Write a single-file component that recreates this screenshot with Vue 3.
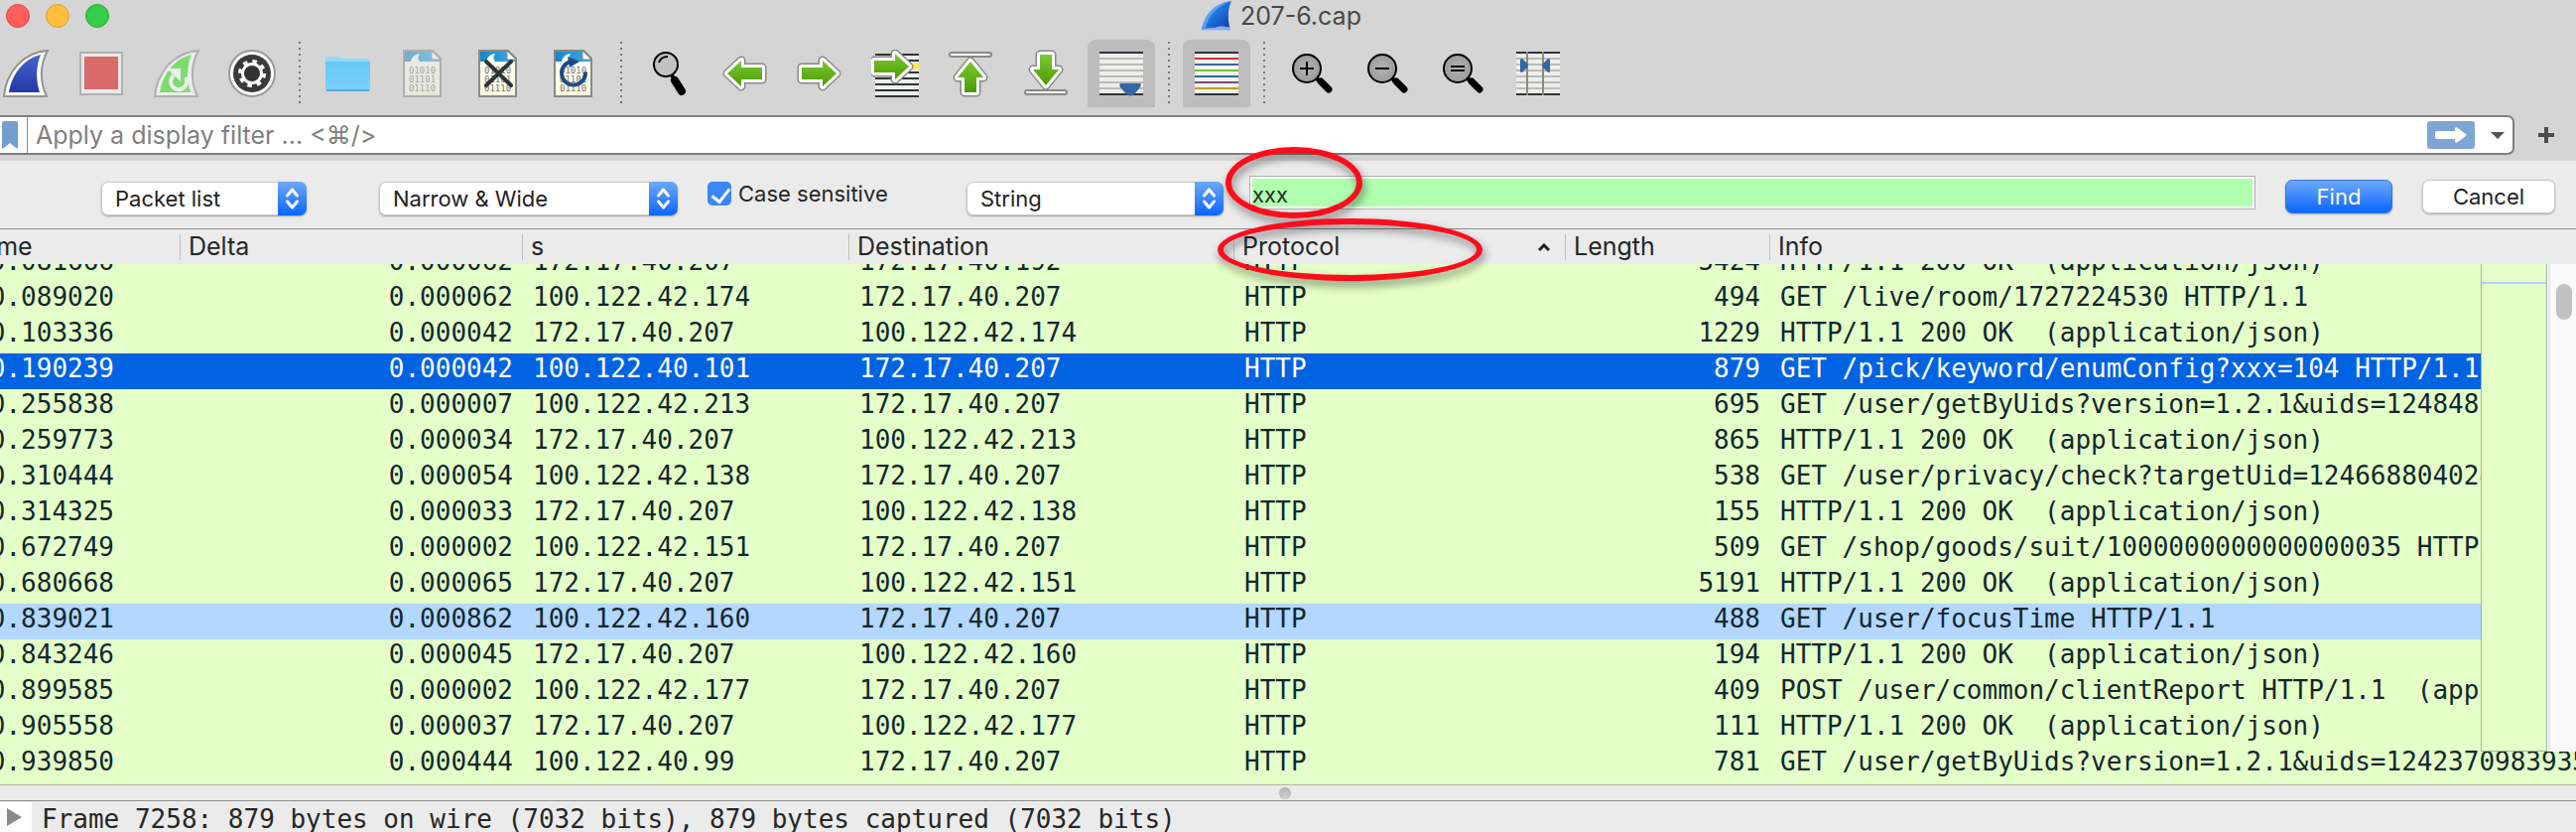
<script setup>
import { ref } from 'vue'

const filter = ref('')
const term = ref('xxx')
const caseSensitive = ref(true)

const columns = [
  { label: 'Time', cls: 'c-time' },
  { label: 'Delta', cls: 'c-delta' },
  { label: 's', cls: 'c-src' },
  { label: 'Destination', cls: 'c-dst' },
  { label: 'Protocol', cls: 'c-proto' },
  { label: 'Length', cls: 'c-len' },
  { label: 'Info', cls: 'c-info' },
]

const OK = 'HTTP/1.1 200 OK  (application/json)'
const rows = [
  ['0.081666', '0.000062', '172.17.40.207', '172.17.40.192', '5424', OK, 'cut'],
  ['0.089020', '0.000062', '100.122.42.174', '172.17.40.207', '494', 'GET /live/room/1727224530 HTTP/1.1'],
  ['0.103336', '0.000042', '172.17.40.207', '100.122.42.174', '1229', OK],
  ['0.190239', '0.000042', '100.122.40.101', '172.17.40.207', '879', 'GET /pick/keyword/enumConfig?xxx=104 HTTP/1.1', 'selected'],
  ['0.255838', '0.000007', '100.122.42.213', '172.17.40.207', '695', 'GET /user/getByUids?version=1.2.1&uids=1248481'],
  ['0.259773', '0.000034', '172.17.40.207', '100.122.42.213', '865', OK],
  ['0.310444', '0.000054', '100.122.42.138', '172.17.40.207', '538', 'GET /user/privacy/check?targetUid=124668804024'],
  ['0.314325', '0.000033', '172.17.40.207', '100.122.42.138', '155', OK],
  ['0.672749', '0.000002', '100.122.42.151', '172.17.40.207', '509', 'GET /shop/goods/suit/1000000000000000035 HTTP/1.1'],
  ['0.680668', '0.000065', '172.17.40.207', '100.122.42.151', '5191', OK],
  ['0.839021', '0.000862', '100.122.42.160', '172.17.40.207', '488', 'GET /user/focusTime HTTP/1.1', 'related'],
  ['0.843246', '0.000045', '172.17.40.207', '100.122.42.160', '194', OK],
  ['0.899585', '0.000002', '100.122.42.177', '172.17.40.207', '409', 'POST /user/common/clientReport HTTP/1.1  (app'],
  ['0.905558', '0.000037', '172.17.40.207', '100.122.42.177', '111', OK],
  ['0.939850', '0.000444', '100.122.40.99', '172.17.40.207', '781', 'GET /user/getByUids?version=1.2.1&uids=1242370983935'],
]

const stripes = [9, 15, 21, 27, 33, 39]
const colorStripes = [
  [9, '#d8322f'], [15, '#3465a4'], [21, '#73c820'], [27, '#3465a4'], [33, '#75507b'], [39, '#c4a000'],
]
const fin = 'M2 47C4 24 20 3 46 1C38 15 38 33 45 47Z'
const right = 'M6 18H27V11L41 24L27 37V30H6Z'
const left = 'M42 18H21V11L7 24L21 37V30H42Z'
const up = 'M24 12L37 28H30V43H18V28H11Z'
const down = 'M24 36L37 20H30V5H18V20H11Z'
const page = 'M5 1H34L42 9V47H5Z'
</script>

<template>
  <div class="window">
    <svg class="defs" width="0" height="0" aria-hidden="true">
      <defs>
        <linearGradient id="g-green" x1="0" y1="0" x2="0" y2="1"><stop offset="0" stop-color="#7bc832" /><stop offset="1" stop-color="#4e9a06" /></linearGradient>
        <linearGradient id="g-blue" x1="0" y1="0" x2="0" y2="1"><stop offset="0" stop-color="#4664cc" /><stop offset="1" stop-color="#2238a4" /></linearGradient>
        <linearGradient id="g-fin" x1="0" y1="0" x2="1" y2="1"><stop offset="0" stop-color="#5aa8f2" /><stop offset=".5" stop-color="#1c70dc" /><stop offset="1" stop-color="#0c3a9c" /></linearGradient>
        <linearGradient id="g-folder" x1="0" y1="0" x2="0" y2="1"><stop offset="0" stop-color="#66c8f6" /><stop offset="1" stop-color="#7cd0fc" /></linearGradient>
        <linearGradient id="g-sky" x1="0" y1="0" x2="1" y2="0"><stop offset="0" stop-color="#1a86c8" /><stop offset="1" stop-color="#3aaae8" /></linearGradient>
        <linearGradient id="g-paper" x1="0" y1="0" x2="0" y2="1"><stop offset="0" stop-color="#ffffff" /><stop offset="1" stop-color="#fcfbe0" /></linearGradient>
        <radialGradient id="g-lens"><stop offset="0" stop-color="#b4b4b4" /><stop offset="1" stop-color="#9c9c9c" /></radialGradient>
      </defs>
    </svg>

    <header class="chrome">
      <div class="titlebar">
        <div class="lights">
          <button class="light close" aria-label="Close"></button>
          <button class="light mini" aria-label="Minimize"></button>
          <button class="light full" aria-label="Zoom window"></button>
        </div>
        <div class="title">
          <svg width="32" height="32" viewBox="0 0 32 32" aria-hidden="true">
            <path d="M1 30C4 14 14 3 31 1C27 9 27 20 30 30Z" fill="url(#g-fin)" />
            <path d="M1 30C4 14 14 3 31 1C17 6 8 15 5 28Z" fill="#7cbcf6" opacity=".6" />
            <path d="M1 30C8 27 12 29 17 27S26 28 30 27V31H1Z" fill="#a8c4ec" opacity=".8" />
          </svg>
          <span>207-6.cap</span>
        </div>
      </div>

      <div class="toolbar">
        <button class="tool" aria-label="Start capture">
          <svg viewBox="0 0 48 48"><path :d="fin" fill="#fff" stroke="#949494" stroke-width="2" /><path d="M7 43C10 25 22 9 39 5C34 17 34 31 38 43Z" fill="url(#g-blue)" /></svg>
        </button>
        <button class="tool" aria-label="Stop capture">
          <svg viewBox="0 0 48 48"><rect x="3" y="3" width="42" height="42" fill="#e9e9e9" stroke="#b0b0b0" stroke-width="2" /><rect x="7" y="7" width="34" height="33" fill="#d86a6a" /></svg>
        </button>
        <button class="tool" aria-label="Restart capture">
          <svg viewBox="0 0 48 48">
            <path :d="fin" fill="#ececec" stroke="#b0b0b0" stroke-width="2" /><path d="M7 43C10 25 22 9 39 5C34 17 34 31 38 43Z" fill="#7ddc6c" />
            <path d="M33 28A8 8 0 1 1 21 26" fill="none" stroke="#eee" stroke-width="4" /><path d="M14 19H28V32Z" fill="#eee" />
          </svg>
        </button>
        <button class="tool" aria-label="Capture options">
          <svg viewBox="0 0 48 48">
            <circle cx="24" cy="24" r="23" fill="#fff" stroke="#999" stroke-width="2" /><circle cx="24" cy="24" r="19" fill="#3a3a3a" />
            <circle cx="24" cy="24" r="11" fill="#fff" /><circle cx="24" cy="24" r="12" fill="none" stroke="#fff" stroke-width="4" stroke-dasharray="4.4 5.025" />
            <circle cx="24" cy="24" r="8" fill="#333" />
          </svg>
        </button>
        <i class="sep"></i>
        <button class="tool" aria-label="Open">
          <svg viewBox="0 0 48 48"><path d="M2 9Q2 7 4 7H14L18 9H44Q47 9 47 12V40H2Z" fill="#92dafa" /><path d="M2 12H47V40Q47 42 45 42H4Q2 42 2 40Z" fill="url(#g-folder)" /><path d="M3 41H46" stroke="#58a8d0" stroke-width="2" /></svg>
        </button>
        <button v-for="kind in ['save', 'close', 'reload']" :key="kind" class="tool" :class="{ faded: kind === 'save' }" :aria-label="kind + ' file'">
          <svg viewBox="0 0 48 48">
            <path :d="page" fill="url(#g-paper)" /><path d="M6 2H33L41 10V12H6Z" fill="url(#g-sky)" />
            <path d="M12 12C13 7 17 4 21 4C19 7 19 10 21 12Z" fill="#fff" /><path d="M33 1V10H42Z" fill="#fff" stroke="#888" />
            <path :d="page" fill="none" stroke="#888a85" stroke-width="2" />
            <g class="bits"><text x="10" y="24">01010</text><text x="10" y="33">01101</text><text x="10" y="42">01110</text></g>
            <path v-if="kind === 'close'" d="M12 12L37 36M37 12L12 36" stroke="#2e3436" stroke-width="4" stroke-linecap="round" />
            <g v-if="kind === 'reload'"><path d="M21 12A12 12 0 1 0 36 24" fill="none" stroke="#204a87" stroke-width="4" stroke-linecap="round" /><path d="M18 7L30 12L20 18Z" fill="#204a87" /></g>
          </svg>
        </button>
        <i class="sep"></i>
        <button class="tool" aria-label="Find packet">
          <svg viewBox="0 0 48 48"><path d="M30 31L37 42" stroke="#000" stroke-width="8" stroke-linecap="round" /><path d="M27 26L31 32" stroke="#000" stroke-width="4" /><circle cx="21" cy="15" r="12" fill="#c2c2c2" stroke="#000" stroke-width="2" /><path d="M14 13Q16 7 23 7" fill="none" stroke="#000" stroke-width="2" /></svg>
        </button>
        <button class="tool" aria-label="Previous packet">
          <svg viewBox="0 0 48 48" class="arrow"><path :d="left" class="o" /><path :d="left" class="w" /><path :d="left" class="f" /></svg>
        </button>
        <button class="tool" aria-label="Next packet">
          <svg viewBox="0 0 48 48" class="arrow"><path :d="right" class="o" /><path :d="right" class="w" /><path :d="right" class="f" /></svg>
        </button>
        <button class="tool" aria-label="Go to packet">
          <svg viewBox="0 0 48 48" class="arrow">
            <rect x="4" y="4" width="44" height="44" fill="#eeeeec" /><rect x="36" y="14" width="12" height="6" fill="#fce94f" />
            <path d="M4 5H48M4 11H48M4 23H48M4 29H48M4 35H48M4 41H48M4 47H48" stroke="#2e3436" stroke-width="2" />
            <g transform="translate(-3 -7)"><path :d="right" class="o" /><path :d="right" class="w" /><path :d="right" class="f" /></g>
          </svg>
        </button>
        <button class="tool" aria-label="First packet">
          <svg viewBox="0 0 48 48" class="arrow"><rect x="3" y="3" width="42" height="4" rx="2" class="bar" /><path :d="up" class="o" /><path :d="up" class="w" /><path :d="up" class="f" /></svg>
        </button>
        <button class="tool" aria-label="Last packet">
          <svg viewBox="0 0 48 48" class="arrow"><path :d="down" class="o" /><path :d="down" class="w" /><path :d="down" class="f" /><rect x="3" y="41" width="42" height="4" rx="2" class="bar" /></svg>
        </button>
        <button class="tool on" aria-label="Auto scroll" aria-pressed="true">
          <svg viewBox="0 0 48 48">
            <rect x="2" y="2" width="44" height="44" fill="#eeeeec" />
            <rect v-for="y in stripes" :key="y" x="2" :y="y - 1" width="44" height="2" fill="#babdb6" />
            <path d="M2 3H46M2 45H46" stroke="#2e3436" stroke-width="2" />
            <path d="M24 34H42Q45 34 43 38L37 45Q33 48 29 45L23 38Q21 34 24 34Z" fill="#3465a4" />
          </svg>
        </button>
        <i class="sep"></i>
        <button class="tool on" aria-label="Colorize packets" aria-pressed="true">
          <svg viewBox="0 0 48 48">
            <rect x="2" y="2" width="44" height="44" fill="#f2f2f2" />
            <rect v-for="[y, c] in colorStripes" :key="y" x="2" :y="y - 1" width="44" height="2" :fill="c" />
            <path d="M2 3H46M2 45H46" stroke="#2e3436" stroke-width="2" />
          </svg>
        </button>
        <i class="sep"></i>
        <button v-for="z in [['Zoom in', 'M12 19H26M19 12V26'], ['Zoom out', 'M12 19H26'], ['Normal size', 'M12 17H26M12 21H26']]" :key="z[0]" class="tool" :aria-label="z[0]">
          <svg viewBox="0 0 48 48"><path d="M33 32L41 40" stroke="#000" stroke-width="7" stroke-linecap="round" /><path d="M28 28L34 34" stroke="#000" stroke-width="4" /><circle cx="19" cy="19" r="14" fill="url(#g-lens)" stroke="#000" stroke-width="2" /><path :d="z[1]" stroke="#000" stroke-width="2" /></svg>
        </button>
        <button class="tool" aria-label="Resize columns">
          <svg viewBox="0 0 48 48">
            <rect x="2" y="2" width="44" height="44" fill="#eeeeec" />
            <rect v-for="y in stripes" :key="y" x="2" :y="y - 1" width="44" height="2" fill="#babdb6" />
            <path d="M2 3H46M2 45H46" stroke="#2e3436" stroke-width="2" /><path d="M13 2V46M29 2V46" stroke="#888a85" stroke-width="2" />
            <path d="M6 10Q7 8 9 10L13 14Q15 16 13 18L9 22Q7 24 6 22Z" fill="#3465a4" /><path d="M36 10Q35 8 33 10L29 14Q27 16 29 18L33 22Q35 24 36 22Z" fill="#3465a4" />
          </svg>
        </button>
      </div>

      <div class="filter-row">
        <div class="filter-box">
          <button class="bookmark" aria-label="Filter bookmarks">
            <svg width="16" height="28" viewBox="0 0 16 28"><path d="M0 2Q0 0 2 0H14Q16 0 16 2V27Q16 28 14 27L8 22L2 27Q0 28 0 27Z" fill="#729fcf" /></svg>
          </button>
          <input v-model="filter" type="text" class="filter-input" placeholder="Apply a display filter ... <⌘/>" aria-label="Display filter" />
          <button class="apply" aria-label="Apply filter">
            <svg width="48" height="28" viewBox="0 0 48 28"><rect width="48" height="28" rx="3" fill="#7ea5d3" /><path d="M10 10H28V8Q28 5 31 7L39 13Q40 14 39 15L31 21Q28 23 28 20V18H10Q8 18 8 16V12Q8 10 10 10Z" fill="#fff" /></svg>
          </button>
          <button class="recent" aria-label="Recent filters">
            <svg width="14" height="8" viewBox="0 0 14 8"><path d="M0 1H14L7 8Z" fill="#555" /></svg>
          </button>
        </div>
        <button class="add" aria-label="Add filter button">
          <svg width="16" height="16" viewBox="0 0 16 16"><path d="M8 0V16M0 8H16" stroke="#4c4c4c" stroke-width="4" /></svg>
        </button>
      </div>
    </header>

    <form class="search" @submit.prevent>
      <span class="combo w-scope"><select aria-label="Search in"><option>Packet list</option></select><svg viewBox="0 0 28 34"><path d="M9 14L14 8L19 14M9 20L14 26L19 20" /></svg></span>
      <span class="combo w-charset"><select aria-label="Character width"><option>Narrow &amp; Wide</option></select><svg viewBox="0 0 28 34"><path d="M9 14L14 8L19 14M9 20L14 26L19 20" /></svg></span>
      <label class="check"><input v-model="caseSensitive" type="checkbox" /><span>Case sensitive</span></label>
      <span class="combo w-kind"><select aria-label="Search type"><option>String</option></select><svg viewBox="0 0 28 34"><path d="M9 14L14 8L19 14M9 20L14 26L19 20" /></svg></span>
      <div class="term"><input v-model="term" type="text" aria-label="Search term" /><span class="ring ring-term"></span></div>
      <button class="push primary">Find</button>
      <button class="push" type="button">Cancel</button>
    </form>

    <main class="packets">
      <table>
        <colgroup><col v-for="c in columns" :key="c.cls" :class="c.cls" /></colgroup>
        <thead>
          <tr>
            <th v-for="c in columns" :key="c.label" scope="col" :aria-sort="c.label === 'Protocol' ? 'ascending' : 'none'">
              <div class="head">
                <span>{{ c.label }}</span>
                <svg v-if="c.label === 'Protocol'" width="12" height="8" viewBox="0 0 12 8"><path d="M1 7L6 2L11 7" fill="none" stroke="#222" stroke-width="3" /></svg>
              </div>
              <span v-if="c.label === 'Protocol'" class="ring ring-proto"></span>
            </th>
          </tr>
        </thead>
        <tbody>
          <tr v-for="(r, i) in rows" :key="i" :class="r[6]">
            <td class="time"><div><span>{{ r[0] }}</span></div></td>
            <td class="num"><div><span>{{ r[1] }}</span></div></td>
            <td><div><span>{{ r[2] }}</span></div></td>
            <td><div><span>{{ r[3] }}</span></div></td>
            <td><div><span>HTTP</span></div></td>
            <td class="num"><div><span>{{ r[4] }}</span></div></td>
            <td><div><span>{{ r[5] }}</span></div></td>
          </tr>
        </tbody>
      </table>
      <aside class="gutter">
        <div class="minimap"><i></i></div>
        <div class="scroll"><i></i></div>
      </aside>
    </main>

    <div class="splitter"><i></i></div>

    <section class="details">
      <button class="twisty" aria-label="Expand frame"><svg width="16" height="18" viewBox="0 0 16 18"><path d="M0 0L15 9L0 18Z" fill="#8b8b8b" /></svg></button>
      <span>Frame 7258: 879 bytes on wire (7032 bits), 879 bytes captured (7032 bits)</span>
    </section>
  </div>
</template>

<style>
body { background: #ebebeb; }
</style>

<style scoped>
.window { position: relative; overflow: hidden; background: #ebebeb; color: #262626; font-family: Inter, "Liberation Sans", "DejaVu Sans", sans-serif; font-size: 22px; }
.window * { box-sizing: border-box; }
.defs { position: absolute; }
button { font: inherit; color: inherit; border: 0; padding: 0; background: none; }
svg { display: block; }

.chrome { background: #d5d5d5; padding-bottom: 6px; }
.titlebar { display: grid; grid-template-columns: 1fr auto 1fr; align-items: center; height: 32px; padding-right: 14px; }
.lights { display: flex; gap: 16px; padding-left: 6px; }
.light { width: 24px; height: 24px; border-radius: 50%; border: 1px solid; }
.close { background: #ff5f5a; border-color: #e2463f; }
.mini { background: #ffbe3f; border-color: #e0a030; }
.full { background: #35cb4b; border-color: #28ab36; }
.title { display: flex; align-items: center; gap: 8px; color: #484848; font-size: 25px; line-height: 32px; }

.toolbar { display: flex; margin: 8px 0 8px -12px; }
.tool { flex: none; width: 68px; height: 68px; margin: 0 4px; display: flex; align-items: center; justify-content: center; }
.tool svg { width: 48px; height: 48px; }
.tool.on { background: #bdbdbd; border-radius: 8px 8px 0 0; }
.faded { opacity: .5; }
.sep { flex: none; width: 2px; height: 64px; margin: 2px 9px; background: repeating-linear-gradient(#777 0 2px, transparent 2px 6px); }
.bits { font: 9px "DejaVu Sans Mono", monospace; fill: #777; }
.arrow path { stroke-linejoin: round; }
.arrow .o { fill: #888a85; stroke: #888a85; stroke-width: 9px; }
.arrow .w { fill: #fff; stroke: #fff; stroke-width: 6px; }
.arrow .f { fill: url(#g-green); }
.arrow .bar { fill: #fff; stroke: #888a85; stroke-width: 2px; }

.filter-row { display: flex; align-items: center; }
.filter-box { flex: 1; display: flex; align-items: center; height: 40px; background: #fff; border: 2px solid #7f7f7f; border-left: 0; border-radius: 0 7px 7px 0; }
.bookmark { width: 28px; height: 36px; padding-left: 2px; border-right: 1px solid #8d8d8d; display: flex; align-items: center; }
.filter-input { flex: 1; min-width: 0; height: 36px; border: 0; outline: 0; background: none; padding: 0 0 0 8px; font: 25px/36px Inter, "Liberation Sans", "DejaVu Sans", sans-serif; color: #262626; }
.filter-input::placeholder { color: #7f7f7f; opacity: 1; }
.recent { margin: 0 8px 0 16px; }
.add { padding: 0 22px 0 24px; }

.search { display: flex; align-items: flex-start; height: 69px; padding: 15px 21px 0 102px; border-bottom: 1px solid #8e8e8e; }
.combo { position: relative; flex: none; height: 34px; margin-top: 6px; border-radius: 7px; box-shadow: 0 1px 2px #0005; }
.combo select { appearance: none; width: 100%; height: 34px; border: 1px solid #c8c8c8; border-radius: 7px; background: #fff; padding: 0 40px 0 13px; font: inherit; color: #222; }
.combo svg { position: absolute; right: 0; top: 0; width: 29px; height: 34px; border-radius: 0 7px 7px 0; background: linear-gradient(#6ea7fb, #0a66fe); pointer-events: none; }
.combo path { fill: none; stroke: #fff; stroke-width: 3px; stroke-linecap: round; stroke-linejoin: round; }
.w-scope { width: 207px; margin-right: 73px; }
.w-charset { width: 301px; margin-right: 30px; }
.w-kind { width: 259px; margin-right: 26px; }
.check { display: flex; align-items: center; gap: 7px; width: 261px; height: 24px; margin-top: 6px; line-height: 24px; white-space: nowrap; }
.check input { appearance: none; flex: none; width: 24px; height: 24px; margin: 0; border-radius: 5px; background: #fff; border: 1px solid #bbb; }
.check input:checked { border: 0; background: #3c86f7; position: relative; }
.check input:checked::after { content: ""; position: absolute; left: 8px; top: 3px; width: 8px; height: 15px; border: solid #fff; border-width: 0 3px 3px 0; transform: rotate(38deg); }
.term { position: relative; flex: 1; height: 34px; padding: 2px; border: 1px solid #b0b0b0; background: #fff; }
.term input { display: block; width: 100%; height: 28px; border: 0; outline: 0; padding: 3px 0 0; background: #afffaf; font: 22px/24px Inter, "Liberation Sans", sans-serif; color: #1f2f1f; }
.ring { position: absolute; border: 6px solid #fc0d1b; border-radius: 50%; filter: drop-shadow(2px 5px 4px #0007); pointer-events: none; z-index: 2; }
.ring-term { left: -25px; top: -30px; width: 138px; height: 72px; }
.ring-proto { left: -16px; top: -11px; width: 267px; height: 63px; }
.push { flex: none; width: 134px; height: 34px; margin: 4px 0 0 30px; border-radius: 7px; border: 1px solid #c8c8c8; background: #fff; box-shadow: 0 1px 2px #0004; line-height: 30px; color: #222; }
.push.primary { width: 108px; border-color: #2f74e0; background: linear-gradient(#6ea7fb, #0a66fe); color: #fff; }

.packets { position: relative; background: #e4ffc7; padding-bottom: 2px; }
table { width: calc(100% + 35px); margin-left: -35px; table-layout: fixed; border-collapse: collapse; }
.c-time { width: 216px; }
.c-delta { width: 345px; }
.c-src { width: 329px; }
.c-dst { width: 388px; }
.c-proto { width: 334px; }
.c-len { width: 206px; }
th { position: relative; height: 35px; padding: 0; background: #ebebeb; font-weight: 400; text-align: left; }
.head { display: flex; align-items: center; justify-content: space-between; height: 26px; padding: 0 15px 0 8px; border-left: 1px solid #bfbfbf; font-size: 25px; line-height: 24px; }
.head > span { padding-bottom: 2px; }
td { padding: 0 0 0 11px; font: 26px/30px "DejaVu Sans Mono", monospace; color: #12272e; white-space: pre; }
td div { height: 36px; }
td span { display: block; }
.num { text-align: right; padding-right: 9px; }
.time { text-align: right; padding-right: 66px; }
.cut div { height: 18px; overflow: hidden; }
.cut span { margin-top: -18px; }
.selected { background: #0063e1; }
.selected td { color: #fff; }
.related { background: #b3d7ff; }
.gutter { position: absolute; top: 35px; right: 0; bottom: 33px; width: 96px; display: flex; background: #fff; }
.minimap { width: 67px; background: #e4ffc7; border: solid #a9b0a2; border-width: 0 1px 1px; padding-top: 18px; }
.minimap i { display: block; height: 2px; background: #aed4fb; }
.scroll { flex: 1; margin-left: 1px; border-left: 2px solid #e8e8e8; background: #fafafa; padding: 20px 0 0 6px; }
.scroll i { display: block; width: 16px; height: 36px; border-radius: 8px; background: #c1c1c1; }

.splitter { height: 17px; border: solid #8e8e8e; border-width: 1px 0; border-top-color: #b0b4ac; display: flex; align-items: center; justify-content: center; }
.splitter i { width: 12px; height: 12px; margin-right: 6px; border-radius: 50%; background: radial-gradient(circle at 50% 80%, #d0d0d0, #acacac); }
.details { display: flex; height: 31px; overflow: hidden; font: 26px/30px "DejaVu Sans Mono", monospace; white-space: pre; }
.details span { padding: 3px 0 0 10px; }
.twisty { width: 32px; flex: none; margin-top: 1px; padding: 0 0 0 7px; background: #fff; }
</style>
